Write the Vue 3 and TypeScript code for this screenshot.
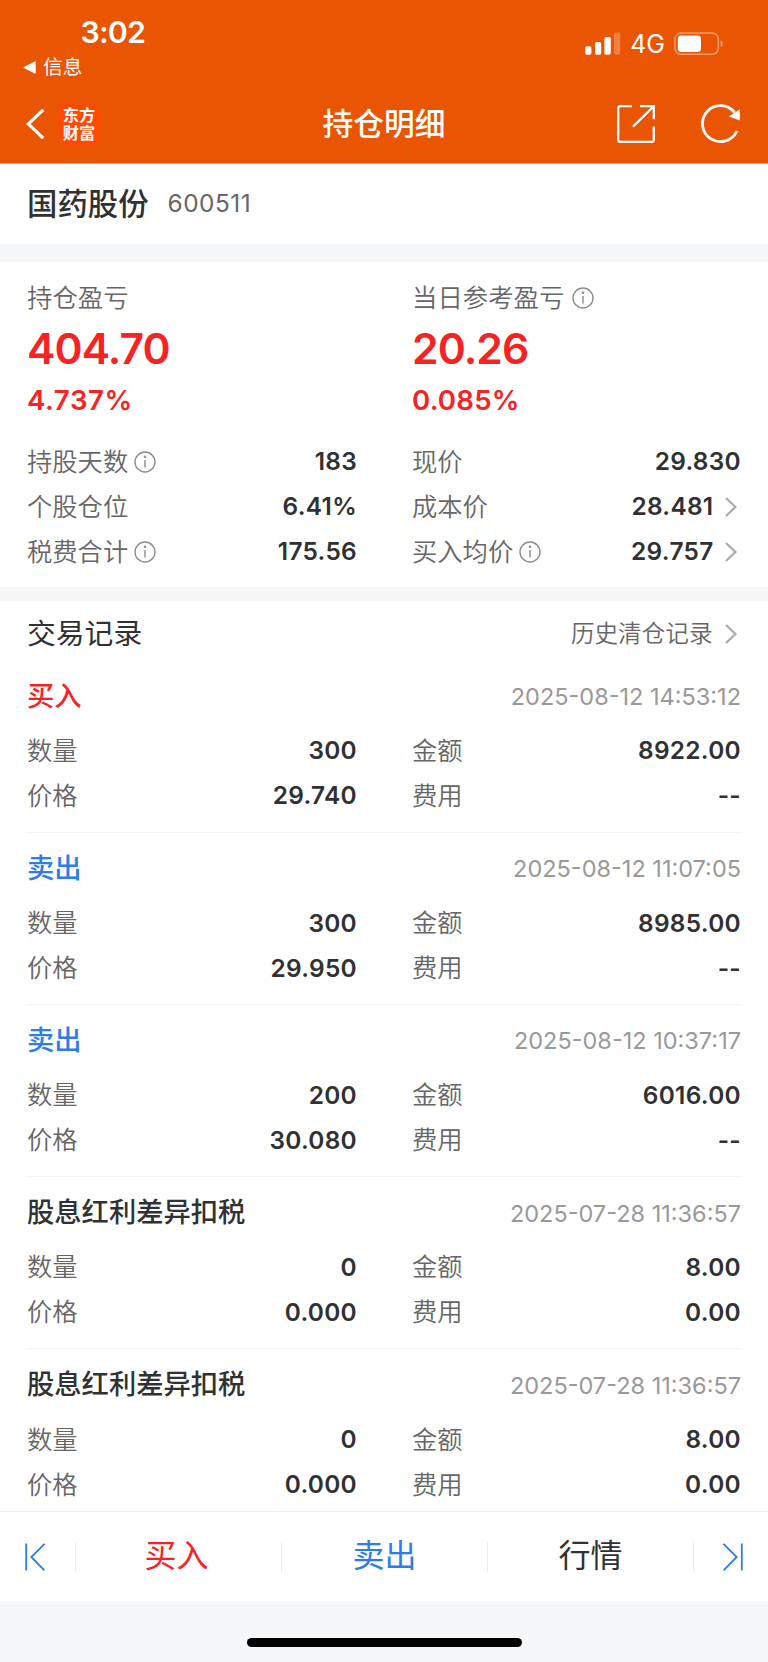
<script setup lang="ts">
interface Stat {
  label: string
  value: string
  info?: boolean
  link?: boolean
}

interface TradeRecord {
  title: string
  kind: 'buy' | 'sell' | 'tax'
  time: string
  quantity: string
  amount: string
  price: string
  fee: string
}

const stats: Stat[] = [
  { label: '持股天数', value: '183', info: true },
  { label: '现价', value: '29.830' },
  { label: '个股仓位', value: '6.41%' },
  { label: '成本价', value: '28.481', link: true },
  { label: '税费合计', value: '175.56', info: true },
  { label: '买入均价', value: '29.757', info: true, link: true },
]

const records: TradeRecord[] = [
  { title: '买入', kind: 'buy', time: '2025-08-12 14:53:12', quantity: '300', amount: '8922.00', price: '29.740', fee: '--' },
  { title: '卖出', kind: 'sell', time: '2025-08-12 11:07:05', quantity: '300', amount: '8985.00', price: '29.950', fee: '--' },
  { title: '卖出', kind: 'sell', time: '2025-08-12 10:37:17', quantity: '200', amount: '6016.00', price: '30.080', fee: '--' },
  { title: '股息红利差异扣税', kind: 'tax', time: '2025-07-28 11:36:57', quantity: '0', amount: '8.00', price: '0.000', fee: '0.00' },
  { title: '股息红利差异扣税', kind: 'tax', time: '2025-07-28 11:36:57', quantity: '0', amount: '8.00', price: '0.000', fee: '0.00' },
]
</script>

<template>
  <div class="screen">
    <header class="header">
      <div class="status">
        <div class="status-left">
          <div class="clock">3:02</div>
          <div class="return">
            <svg width="13" height="13" viewBox="0 0 13 13"><path d="M0.8 6.5 12.2 0.8V12.2Z" fill="#fff" stroke="#fff" stroke-linejoin="round" /></svg>
            <span>信息</span>
          </div>
        </div>
        <div class="status-right">
          <svg width="36" height="24" viewBox="0 0 36 24" fill="#fff">
            <rect x="0.2" y="14.2" width="6.2" height="8.6" rx="1.7" />
            <rect x="10" y="10" width="6.2" height="12.8" rx="1.7" />
            <rect x="19.4" y="5" width="6.4" height="17.8" rx="1.7" />
            <rect x="29" y="0.4" width="6.2" height="22.4" rx="1.7" opacity="0.25" />
          </svg>
          <span class="network">4G</span>
          <svg width="50" height="24" viewBox="0 0 50 24">
            <rect x="0.9" y="0.9" width="43.4" height="21.4" rx="6" fill="none" stroke="#fff" stroke-opacity="0.42" stroke-width="1.5" />
            <rect x="3.8" y="3.4" width="23.2" height="16.6" rx="3.4" fill="#fff" />
            <path d="M46.6 8.2c3 1.2 3 5.6 0 7z" fill="#fff" opacity="0.45" />
          </svg>
        </div>
      </div>
      <nav class="nav">
        <div class="nav-side">
          <svg class="back" width="20" height="32" viewBox="0 0 20 32"><path d="M17.2 1.8 2.2 16 17.2 30.2" fill="none" stroke="#fff" stroke-width="3.2" /></svg>
          <div class="logo"><span>东方</span><span>财富</span></div>
        </div>
        <h1 class="nav-title">持仓明细</h1>
        <div class="nav-side nav-actions">
          <svg width="40" height="40" viewBox="0 0 40 40" fill="none" stroke="#fff" stroke-width="2.3">
            <path d="M16 2.2H4.2a2 2 0 0 0-2 2V35.8a2 2 0 0 0 2 2H35.8a2 2 0 0 0 2-2V22.5" />
            <path d="M24 2.2H37.8V15.2M37 3 17 22.6" />
          </svg>
          <svg width="42" height="40" viewBox="0 0 42 40">
            <path d="M36.9 27A18 18 0 1 1 34.6 8.5" fill="none" stroke="#fff" stroke-width="2.8" />
            <path d="M39.8 5.3V16.5L28.9 12.4Z" fill="#fff" />
          </svg>
        </div>
      </nav>
    </header>

    <section class="stock">
      <span class="stock-name">国药股份</span>
      <span class="stock-code">600511</span>
    </section>

    <section class="summary">
      <div class="profits">
        <div class="profit">
          <div class="profit-label">持仓盈亏</div>
          <div class="profit-value">404.70</div>
          <div class="profit-rate wide">4.737%</div>
        </div>
        <div class="profit">
          <div class="profit-label">
            当日参考盈亏
            <svg class="info" viewBox="0 0 22 22"><circle cx="11" cy="11" r="10" /><path d="M11 9V16.5" /><circle class="dot" cx="11" cy="5.8" r="1.3" /></svg>
          </div>
          <div class="profit-value">20.26</div>
          <div class="profit-rate">0.085%</div>
        </div>
      </div>
      <div class="grid">
        <div v-for="s in stats" :key="s.label" class="cell">
          <span class="label">{{ s.label }}</span>
          <svg v-if="s.info" class="info" viewBox="0 0 22 22"><circle cx="11" cy="11" r="10" /><path d="M11 9V16.5" /><circle class="dot" cx="11" cy="5.8" r="1.3" /></svg>
          <span class="value">{{ s.value }}</span>
          <svg v-if="s.link" class="chevron" viewBox="0 0 12 20"><path d="M1 1 10.5 10 1 19" /></svg>
        </div>
      </div>
    </section>

    <section class="trades">
      <div class="trades-head">
        <h2>交易记录</h2>
        <span class="history">历史清仓记录</span>
        <svg class="chevron" viewBox="0 0 12 20"><path d="M1 1 10.5 10 1 19" /></svg>
      </div>
      <article v-for="(r, i) in records" :key="i" class="record">
        <div class="record-head">
          <span class="record-title" :class="r.kind">{{ r.title }}</span>
          <time>{{ r.time }}</time>
        </div>
        <div class="grid">
          <div class="cell"><span class="label">数量</span><span class="value">{{ r.quantity }}</span></div>
          <div class="cell"><span class="label">金额</span><span class="value">{{ r.amount }}</span></div>
          <div class="cell"><span class="label">价格</span><span class="value">{{ r.price }}</span></div>
          <div class="cell"><span class="label">费用</span><span class="value">{{ r.fee }}</span></div>
        </div>
      </article>
    </section>

    <footer class="toolbar">
      <button class="edge"><svg width="22" height="30" viewBox="0 0 22 30"><path d="M2.2 1.5V28.5M20.6 1.8 7.3 15 20.4 28.3" /></svg></button>
      <button class="action buy">买入</button>
      <button class="action sell">卖出</button>
      <button class="action">行情</button>
      <button class="edge last"><svg width="22" height="30" viewBox="0 0 22 30"><path d="M19.8 1.5V28.5M1.4 1.8 14.7 15 1.6 28.3" /></svg></button>
    </footer>
    <div class="home"><div class="home-bar"></div></div>
  </div>
</template>

<style>
html,
body {
  background: #f6f7f9;
}
</style>

<style scoped>
.screen {
  display: flex;
  flex-direction: column;
  width: 768px;
  height: 1662px;
  overflow: hidden;
  background: #f6f7f9;
  color: #303133;
  font-family: Inter, 'Noto Sans CJK SC', sans-serif;
  line-height: 1.2;
}
.header {
  flex: none;
  box-sizing: border-box;
  height: 164px;
  border-bottom: 1px solid #f4aa82;
  background: #ea5504;
  color: #fff;
}
.status {
  display: flex;
  justify-content: space-between;
  height: 84px;
}
.status-left {
  padding: 12px 0 0 23px;
}
.clock {
  padding-left: 57.5px;
  font-size: 30.3px;
  font-weight: 600;
  line-height: 40px;
  letter-spacing: -0.8px;
}
.return {
  display: flex;
  align-items: center;
  gap: 7px;
  height: 31px;
  font-size: 19.8px;
}
.status-right {
  display: flex;
  align-items: flex-start;
  padding: 32px 44px 0 0;
}
.network {
  margin: 0 9px;
  font-size: 25px;
  line-height: 25px;
}
.nav {
  display: flex;
  align-items: center;
  justify-content: space-between;
  height: 80px;
}
.nav-side {
  display: flex;
  align-items: center;
  width: 180px;
}
.back {
  margin-left: 26px;
}
.logo {
  display: flex;
  flex-direction: column;
  align-items: center;
  justify-content: center;
  width: 42px;
  height: 42px;
  margin-left: 12px;
  border-radius: 9px;
  background: #ff4a05;
  font-size: 16.2px;
  font-weight: 700;
  line-height: 18px;
}
.nav-title {
  margin: 0;
  padding-top: 1px;
  font-size: 30.7px;
  font-weight: 500;
}
.nav-actions {
  justify-content: flex-end;
  gap: 44px;
  box-sizing: border-box;
  padding-right: 26px;
}
.stock {
  display: flex;
  flex: none;
  align-items: center;
  height: 80px;
  padding-left: 27px;
  background: #fff;
}
.stock-name {
  font-size: 30.4px;
  font-weight: 500;
}
.stock-code {
  margin-left: 19px;
  color: #666;
  font-size: 24.4px;
  letter-spacing: 0.5px;
}
.summary {
  flex: none;
  box-sizing: border-box;
  height: 325px;
  margin: 18px 0 14px;
  padding: 16px 27px 0;
  background: #fff;
}
.profits {
  display: grid;
  grid-template-columns: 330px 329px;
  column-gap: 55px;
  height: 161.5px;
}
.profit-label {
  display: flex;
  align-items: center;
  gap: 8px;
  height: 40px;
  color: #666;
  font-size: 25.4px;
  font-weight: 350;
}
.profit-value {
  color: #f82222;
  font-size: 42.6px;
  font-weight: 600;
  line-height: 61px;
  letter-spacing: -0.9px;
}
.profit-rate {
  color: #f82222;
  font-size: 27.6px;
  font-weight: 600;
  line-height: 43px;
  letter-spacing: 0.2px;
}
.profit-rate.wide {
  letter-spacing: 0.6px;
}
.grid {
  display: grid;
  grid-template-columns: 330px 329px;
  grid-auto-rows: 45px;
  column-gap: 55px;
}
.cell {
  display: flex;
  align-items: center;
}
.label {
  color: #666;
  font-size: 25.3px;
  font-weight: 350;
}
.value {
  margin-left: auto;
  font-size: 24.4px;
  font-weight: 600;
  letter-spacing: 0.3px;
}
.info {
  width: 22px;
  height: 22px;
  fill: none;
  stroke: #8c8c8c;
  stroke-width: 1.4;
}
.info .dot {
  fill: #8c8c8c;
  stroke: none;
}
.cell .info {
  margin-left: 5.5px;
}
.chevron {
  width: 12px;
  height: 20px;
  margin: 0 4px 0 11.5px;
  fill: none;
  stroke: #aaa;
  stroke-width: 2.2;
}
.trades {
  flex: 1;
  min-height: 0;
  overflow: hidden;
  padding: 0 27px;
  background: #fff;
}
.trades-head {
  display: flex;
  align-items: center;
  box-sizing: border-box;
  height: 59.4px;
  padding-top: 7px;
}
h2 {
  margin: 0 auto 0 0;
  font-size: 28.8px;
  font-weight: 400;
}
.history {
  margin-right: 1px;
  color: #666;
  font-size: 23.6px;
  font-weight: 350;
}
.record {
  box-sizing: border-box;
  height: 172.2px;
  padding-top: 14.2px;
  border-bottom: 1px solid #f3f4f5;
}
.record-head {
  display: flex;
  align-items: center;
  justify-content: space-between;
  height: 45px;
  margin-bottom: 8.9px;
}
.record-title {
  font-size: 27.3px;
  font-weight: 500;
}
time {
  color: #999;
  font-size: 23.5px;
}
.buy {
  color: #f82222;
}
.sell {
  color: #2b7de9;
}
.toolbar {
  display: flex;
  flex: none;
  box-sizing: border-box;
  height: 90px;
  border-top: 1px solid #f1f2f3;
  background: #fff;
  align-items: center;
}
button {
  display: flex;
  align-items: center;
  justify-content: center;
  height: 30px;
  padding: 0;
  border: 0;
  background: none;
  color: #303133;
  font: inherit;
}
.edge {
  width: 75px;
  padding-right: 6px;
  box-sizing: border-box;
}
.edge.last {
  padding: 0 0 0 3px;
  border-left: 1px solid #ececec;
}
.edge svg {
  fill: none;
  stroke: #2b7de9;
  stroke-width: 1.8;
}
.action {
  flex: 1;
  box-sizing: border-box;
  border-left: 1px solid #ececec;
  font-size: 32px;
}
.action.buy {
  color: #f82222;
  text-indent: -4px;
}
.action.sell {
  color: #2b7de9;
}
.home {
  display: flex;
  flex: none;
  justify-content: center;
  height: 61px;
}
.home-bar {
  width: 275px;
  height: 9px;
  margin-top: 37px;
  border-radius: 5px;
  background: #000;
}
</style>
